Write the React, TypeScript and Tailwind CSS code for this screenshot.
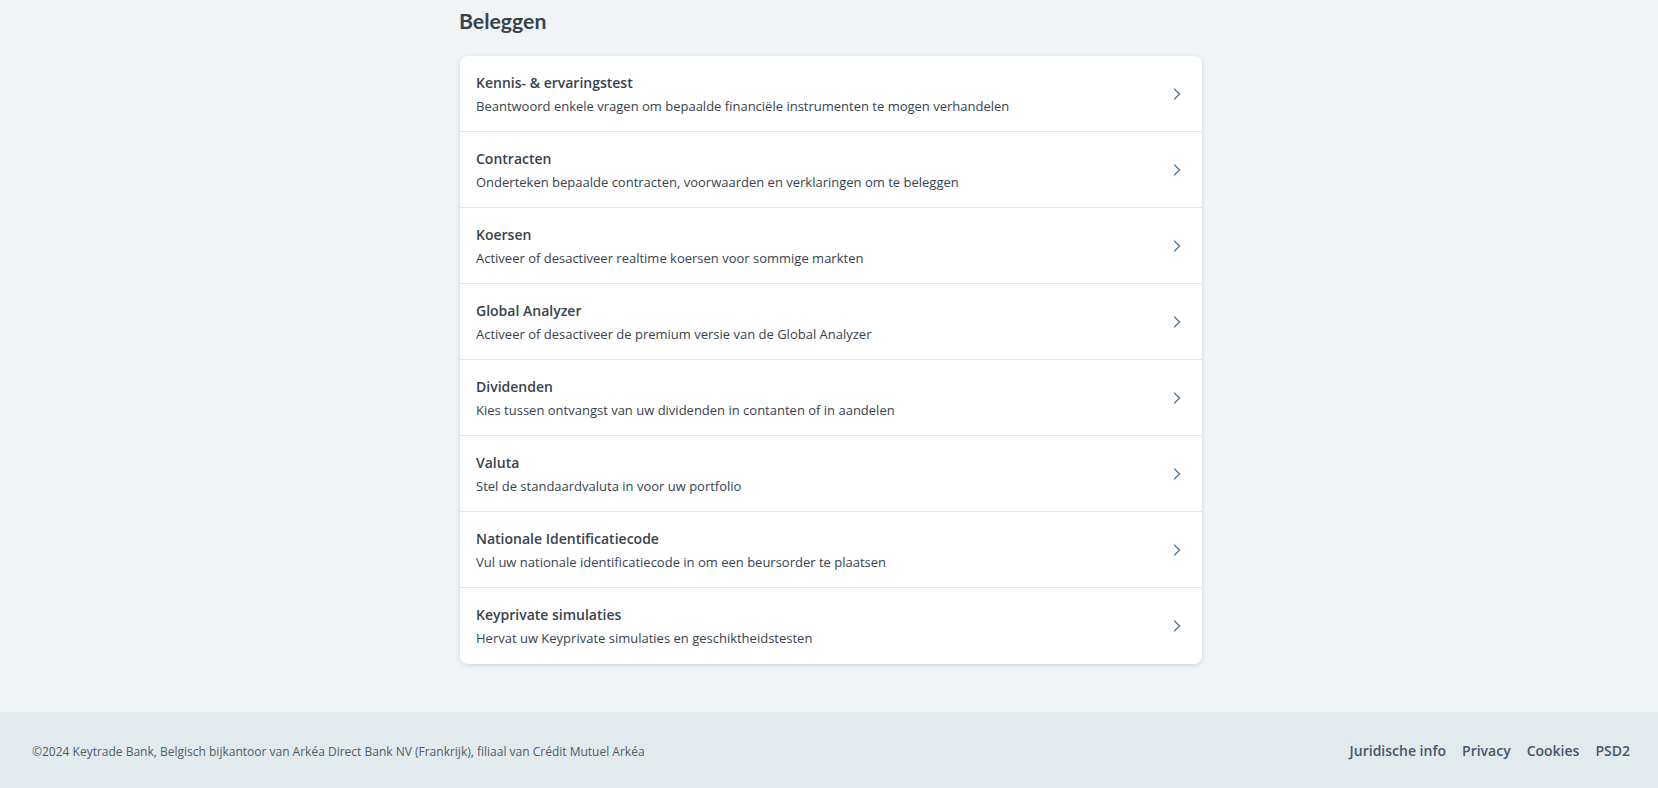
import React from 'react';

interface Item {
  title: string;
  description: string;
}

const items: Item[] = [
  { title: 'Kennis- & ervaringstest', description: 'Beantwoord enkele vragen om bepaalde financiële instrumenten te mogen verhandelen' },
  { title: 'Contracten', description: 'Onderteken bepaalde contracten, voorwaarden en verklaringen om te beleggen' },
  { title: 'Koersen', description: 'Activeer of desactiveer realtime koersen voor sommige markten' },
  { title: 'Global Analyzer', description: 'Activeer of desactiveer de premium versie van de Global Analyzer' },
  { title: 'Dividenden', description: 'Kies tussen ontvangst van uw dividenden in contanten of in aandelen' },
  { title: 'Valuta', description: 'Stel de standaardvaluta in voor uw portfolio' },
  { title: 'Nationale Identificatiecode', description: 'Vul uw nationale identificatiecode in om een beursorder te plaatsen' },
  { title: 'Keyprivate simulaties', description: 'Hervat uw Keyprivate simulaties en geschiktheidstesten' },
];

const links = ['Juridische info', 'Privacy', 'Cookies', 'PSD2'];

function Chevron() {
  return (
    <svg width="8" height="12" viewBox="0 0 8 12" fill="none" className="shrink-0 text-[#4f7a96]">
      <path d="M1.2 0.8L6.6 6L1.2 11.2" stroke="currentColor" strokeWidth="1.4" />
    </svg>
  );
}

export default function App() {
  return (
    <div className="min-h-screen flex flex-col bg-[#f0f4f7] font-['Open_Sans',sans-serif] text-[#36434e]">
      <main className="flex-1 w-[742px] ml-[460px]">
        <h1 className="h-[56px] pt-[8px] -ml-[1px] text-[21.25px] leading-[27px] font-bold font-['Lato',sans-serif]">Beleggen</h1>
        <div className="bg-white rounded-lg shadow-[0_1px_4px_rgba(60,80,100,0.2)] mb-[48px]">
          {items.map((item, index) => (
            <div
              key={item.title}
              className={`h-[76px] pl-4 pr-[21px] flex items-center justify-between border-b ${index < items.length - 1 ? 'border-[#e3e8eb]' : 'border-transparent'}`}
            >
              <div className="pt-[2px]">
                <div className="text-[14px] leading-[20px] font-semibold">{item.title}</div>
                <div className="mt-[3px] text-[13px] leading-[20px]">{item.description}</div>
              </div>
              <Chevron />
            </div>
          ))}
        </div>
      </main>
      <footer className="h-[76px] bg-[#e3eaed] flex items-center justify-between pl-8 pr-[28px]">
        <div className="pt-[3px] text-[12px] text-[#4f5d68]">©2024 Keytrade Bank, Belgisch bijkantoor van Arkéa Direct Bank NV (Frankrijk), filiaal van Crédit Mutuel Arkéa</div>
        <div className="flex gap-4">
          {links.map((link) => (
            <a key={link} className="text-[14px] font-semibold text-[#44566a]">{link}</a>
          ))}
        </div>
      </footer>
    </div>
  );
}
